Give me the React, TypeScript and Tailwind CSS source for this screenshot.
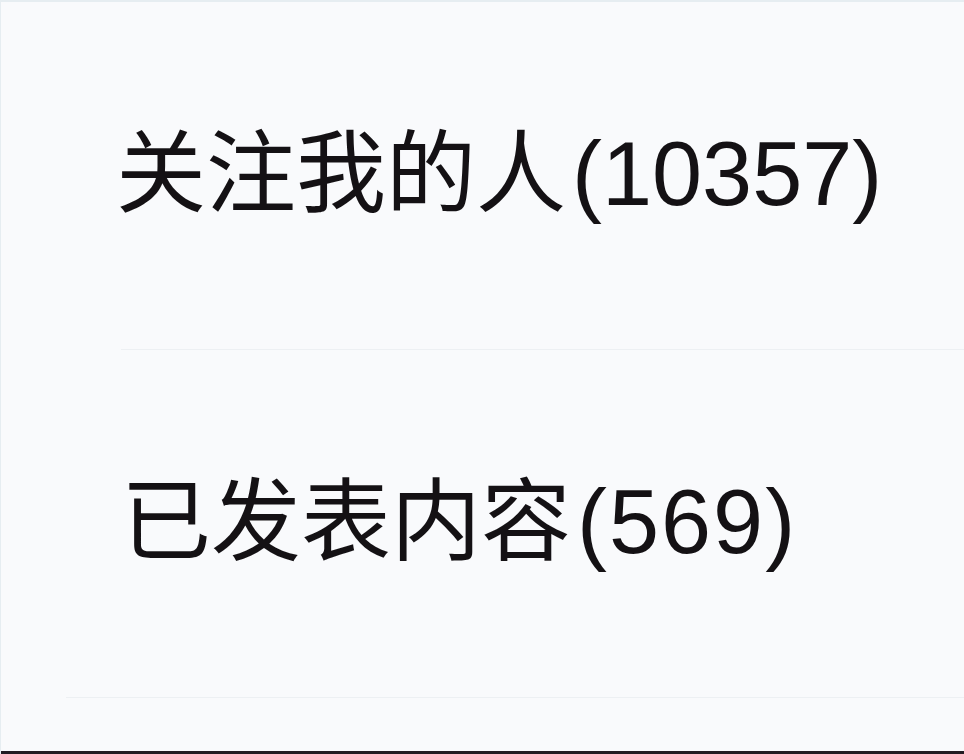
const rows = [
  { label: '关注我的人', count: 10357 },
  { label: '已发表内容', count: 569 },
]

export default function App() {
  return (
    <div className="w-[964px] h-[754px] bg-[#f9fafc] border-t-2 border-l border-[#e6edf1] flex flex-col overflow-hidden">
      {rows.map((row, i) => (
        <div
          key={row.label}
          className={`flex items-center h-[348px] shrink-0 border-b border-[#edf0f3] ${i === 0 ? 'ml-[120px]' : 'ml-[65px]'}`}
        >
          <span
            className={`text-[90px] leading-none text-[#141114] whitespace-nowrap -mt-[4px] ${i === 0 ? '-ml-[5px]' : 'ml-[55px]'}`}
            style={{ fontFamily: '"Liberation Sans", "Noto Sans CJK SC", sans-serif' }}
          >
            {row.label}
            <span className={`ml-[6px] ${i === 0 ? '' : 'tracking-[2px]'}`}>({row.count})</span>
          </span>
        </div>
      ))}
      <div className="flex-1" />
      <div className="h-[3px] bg-[#221c22]" />
    </div>
  )
}
